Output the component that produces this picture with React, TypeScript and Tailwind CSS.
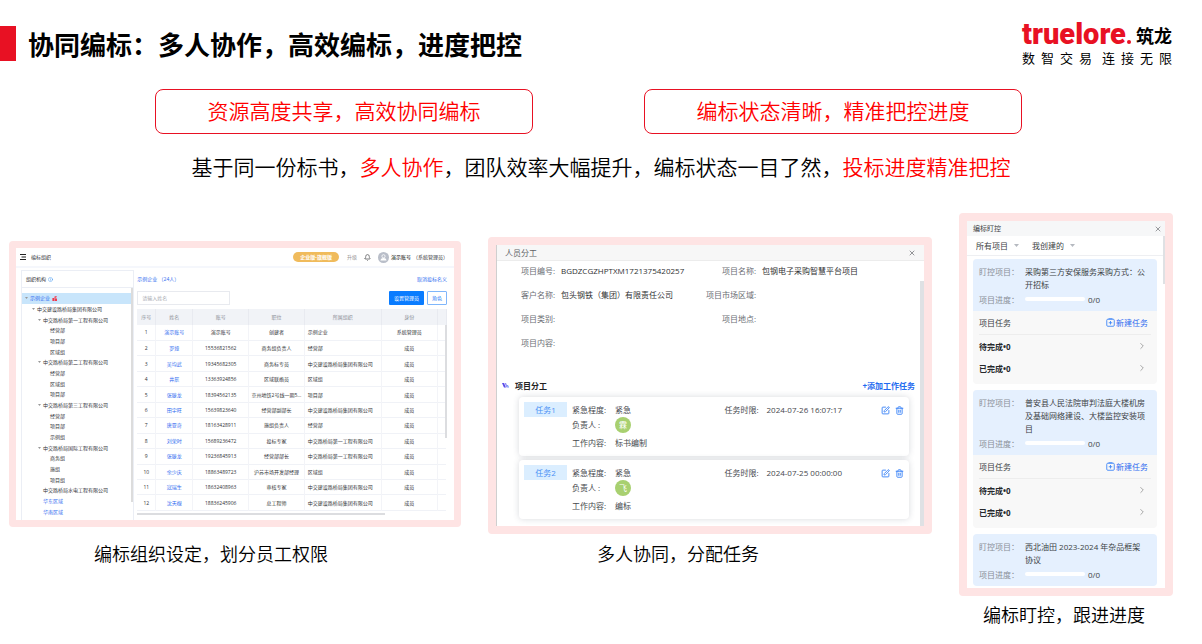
import { Bell, ChevronRight, Info, SquarePen, Trash2, X } from 'lucide-react';

interface TreeNode {
  label: string; level: number; branch?: boolean; active?: boolean; link?: boolean;
}

interface Member {
  name: string; account: string; post: string; org: string; role: string;
}

interface Task {
  tag: string; avatar: string; content: string; deadline: string;
}

const tree: TreeNode[] = [
  { label: '示例企业', level: 0, branch: true, active: true, link: true },
  { label: '中交建设路桥局集团有限公司', level: 1, branch: true },
  { label: '中交路桥局第一工程有限公司', level: 2, branch: true },
  { label: '经营部', level: 3 },
  { label: '项目部', level: 3 },
  { label: '区域组', level: 3 },
  { label: '中交路桥局第二工程有限公司', level: 2, branch: true },
  { label: '经营部', level: 3 },
  { label: '区域组', level: 3 },
  { label: '项目部', level: 3 },
  { label: '中交路桥局第三工程有限公司', level: 2, branch: true },
  { label: '经营部', level: 3 },
  { label: '项目部', level: 3 },
  { label: '示例组', level: 3 },
  { label: '中交路桥局国际工程有限公司', level: 2, branch: true },
  { label: '商务组', level: 3 },
  { label: '施组', level: 3 },
  { label: '项目组', level: 3 },
  { label: '中交路桥局水电工程有限公司', level: 2 },
  { label: '华东区域', level: 2, link: true },
  { label: '华南区域', level: 2, link: true },
];

const indents = ['pl-0.5', 'pl-[9px]', 'pl-[15px]', 'pl-[22px]'];

const members: Member[] = [
  { name: '演示账号', account: '演示账号', post: '创建者', org: '示例企业', role: '系统管理员' },
  { name: '罗娅', account: '15536821562', post: '商务组负责人', org: '经营部', role: '成员' },
  { name: '吴均武', account: '19345682305', post: '商务标专员', org: '中交建设路桥局集团有限公司', role: '成员' },
  { name: '井辰', account: '13363924856', post: '区域联络员', org: '区域组', role: '成员' },
  { name: '张滕龙', account: '18394562135', post: '京州地铁2号线一期5...', org: '项目部', role: '成员' },
  { name: '田宇旺', account: '15639823640', post: '经营部副部长', org: '中交建设路桥局集团有限公司', role: '成员' },
  { name: '唐亚奇', account: '18163428911', post: '施组负责人', org: '经营部', role: '成员' },
  { name: '刘荣时', account: '15689236472', post: '投标专家', org: '中交路桥局第一工程有限公司', role: '成员' },
  { name: '张滕龙', account: '19236845913', post: '经营部部长', org: '中交路桥局第一工程有限公司', role: '成员' },
  { name: '余少庆', account: '18863489723', post: '沪苏市场开发部经理', org: '区域组', role: '成员' },
  { name: '寇瑞生', account: '18632408963', post: '审核专家', org: '中交建设路桥局集团有限公司', role: '成员' },
  { name: '沈天棍', account: '18836245906', post: '总工程师', org: '中交建设路桥局集团有限公司', role: '成员' },
];

const tasks: Task[] = [
  { tag: '任务1', avatar: '霖', content: '标书编制', deadline: '2024-07-26 16:07:17' },
  { tag: '任务2', avatar: '飞', content: '编标', deadline: '2024-07-25 00:00:00' },
];

const projects = [
  { name: '采购第三方安保服务采购方式：公开招标', open: true },
  { name: '普安县人民法院审判法庭大楼机房及基础网络建设、大楼监控安装项目', open: true },
  { name: '西北油田 2023-2024 年杂品框架协议', open: false },
];

function Logo() {
  return (
    <div className="w-[150px]">
      <div className="flex items-end justify-between whitespace-nowrap">
        <div className="flex items-end font-['Roboto'] text-[29px] leading-[28px] font-black text-[#e81123]">
          truelore<span className="mb-1 ml-px h-1 w-1 rounded-full bg-[#e81123]" />
        </div>
        <span className="text-[18px] leading-[24px] font-bold text-black">筑龙</span>
      </div>
      <div className="mt-0.5 flex justify-between text-[13px] leading-[16px] text-black">
        {['数智交易', '连接无限'].map(group => (
          <div key={group} className="flex w-[70px] justify-between">
            {group.split('').map(c => <span key={c}>{c}</span>)}
          </div>
        ))}
      </div>
    </div>
  );
}

function MenuIcon() {
  return (
    <svg viewBox="0 0 12 12" className="h-1.5 w-1.5" fill="#222">
      <path d="M0 0h12v2.200H0zM3 4.900h9v2.200H3zM0 9.800h12V12H0z" />
    </svg>
  );
}

function UserIcon() {
  return (
    <svg viewBox="0 0 22 22" className="h-[11px] w-[11px]">
      <circle cx="11" cy="11" r="11" fill="#b9bec9" />
      <circle cx="11" cy="8.5" r="3.2" fill="none" stroke="#fff" strokeWidth="1.6" />
      <path d="M4.8 17c.6-3.4 3-5 6.200-5s5.600 1.600 6.200 5z" fill="#fff" />
    </svg>
  );
}

function FlagIcon() {
  return (
    <svg viewBox="0 0 12 12" className="h-[5px] w-[5px]" fill="#f0384b">
      <path d="M1 5h4v7H1zM6 1l5-1v3L8 4v2h4v6H6z" />
    </svg>
  );
}

function SectionIcon() {
  return (
    <svg viewBox="0 0 14 10" className="h-[5px] w-[7px]">
      <path d="M0 0h4l4 9H4z" fill="#5b4be8" />
      <path d="M5 0h3l4 9H9z" fill="#8f8bf5" />
      <path d="M10 4h2l2 5h-2z" fill="#5b8df8" />
    </svg>
  );
}

function AddTaskIcon() {
  return (
    <svg viewBox="0 0 18 18" className="h-[9px] w-[9px]" fill="none" stroke="#3f86f7" strokeWidth="1.800">
      <rect x="1.500" y="2.500" width="15" height="14" rx="2" />
      <path d="M5 1.500h8M9 6v7M5.500 9.500h7" />
    </svg>
  );
}

function Caret() {
  return (
    <svg viewBox="0 0 10 6" className="h-[3px] w-[5px]" fill="#b5b9c0"><path d="M0 0h10L5 6z" /></svg>
  );
}

function OrgPanel() {
  return (
    <section className="overflow-hidden rounded border-[7px] border-[#fee4e4] bg-white text-[5px] leading-[8px] text-[#303236]">
      <header className="flex h-[18px] items-center pr-1.5 pl-1">
        <button aria-label="菜单"><MenuIcon /></button>
        <span className="ml-[5px] flex-1">编标组织</span>
        <span className="rounded-full bg-[#f0bb5c] px-[7px] py-px font-bold text-white">企业版-旗舰版</span>
        <a href="#upgrade" className="ml-2 text-[#999]">升级</a>
        <Bell className="mx-[7px] h-[7px] w-[7px]" />
        <UserIcon />
        <span className="ml-0.5 text-black">演示账号</span>
        <span className="ml-0.5">（系统管理员）</span>
      </header>
      <div className="grid grid-cols-[113fr_309fr] gap-[3px] border-t-2 border-[#f5f7fc] pr-[7px] pl-[5px]">
        <div className="relative mt-0.5 flex flex-col border-x border-t border-[#ebeef5]">
          <div className="flex h-[17px] items-center gap-0.5 border-b border-[#ebeef5] pl-1">
            组织机构 <Info className="h-[5px] w-[5px] text-[#2f8cf0]" />
          </div>
          <ul className="mt-[5px] mr-0.5 mb-[3px] flex flex-1 flex-col">
            {tree.map((node, i) => (
              <li key={i} className={`flex flex-1 items-center gap-0.5 whitespace-nowrap ${indents[node.level]} ${node.active ? 'bg-[#c8e5fb]' : ''} ${node.link ? 'text-[#2f6bf0]' : ''}`}>
                <span className="flex w-1 justify-center">
                  {node.branch && <svg viewBox="0 0 10 6" className="h-[2px] w-[3px]" fill="#999"><path d="M0 0h10L5 6z" /></svg>}
                </span>
                {node.label}
                {node.active && <FlagIcon />}
              </li>
            ))}
          </ul>
          <div className="absolute top-[17px] right-0 bottom-[18px] w-0.5 bg-[#dcdcdc]" />
        </div>
        <div className="min-w-0 pt-[3px] pb-[5px]">
          <div className="flex h-4 items-center justify-between text-[#2f6bf0]">
            <span>示例企业 （24人）</span>
            <a href="#cancel">取消投标名义</a>
          </div>
          <div className="mt-1 flex h-3.5 gap-[3px]">
            <input aria-label="请输入姓名" placeholder="请输入姓名" className="w-[30%] border border-[#e8eaef] px-1 placeholder:text-[#a8abb2]" />
            <button className="ml-auto rounded-[1px] bg-[#0a7cff] px-[5px] text-white">设置管理员</button>
            <button className="rounded-[1px] border border-[#7fb6fb] px-1 text-[#2f7df6]">角色</button>
          </div>
          <div className="relative mt-1">
            <table className="h-[202px] w-full table-fixed border-collapse text-center whitespace-nowrap">
              <colgroup>
                <col className="w-[6%]" /><col className="w-[12%]" /><col className="w-[18%]" /><col className="w-[18%]" />
                <col className="w-[25%]" /><col className="w-[18%]" /><col className="w-[3%]" />
              </colgroup>
              <thead className="bg-[#f1f3f7] text-[#8d9097]">
                <tr className="h-4">
                  {['序号', '姓名', '账号', '职位', '所属组织', '身份', ''].map(h => (
                    <th key={h} className="border-r border-[#e8eaf0] p-0 font-normal">{h}</th>
                  ))}
                </tr>
              </thead>
              <tbody>
                {members.map((m, i) => (
                  <tr key={i} className="h-[15px] border-b border-[#f0f2f7]">
                    <td className="border-r border-[#f3f4f8] p-0">{i + 1}</td>
                    <td className="border-r border-[#f3f4f8] p-0 text-[#2f6bf0]">{m.name}</td>
                    <td className="border-r border-[#f3f4f8] p-0">{m.account}</td>
                    <td className="border-r border-[#f3f4f8] p-0">{m.post}</td>
                    <td className="border-r border-[#f3f4f8] p-0 pl-[3px] text-left">{m.org}</td>
                    <td className="border-r border-[#f3f4f8] p-0">{m.role}</td>
                    <td className="p-0" />
                  </tr>
                ))}
              </tbody>
            </table>
            <div className="absolute top-4 right-0 h-[56%] w-0.5 bg-[#dcdde0]" />
          </div>
          <div className="mt-0.5 h-0.5 w-4/5 bg-[#dcdde0]" />
        </div>
      </div>
    </section>
  );
}

function AssignPanel() {
  const info = [
    ['项目编号:', 'BGDZCGZHPTXM1721375420257'], ['项目名称:', '包钢电子采购智慧平台项目'],
    ['客户名称:', '包头钢铁（集团）有限责任公司'], ['项目市场区域:', ''],
    ['项目类别:', ''], ['项目地点:', ''],
    ['项目内容:', ''],
  ];
  return (
    <section className="relative overflow-hidden rounded border-8 border-[#fee4e4] bg-white text-[8px] leading-[10px] text-[#45484d]">
      <div className="border-l border-[#cfcfcf] pb-[7px]">
        <header className="flex h-4 items-center justify-between border-b border-[#ececec] bg-[#f7f7f7] pr-2 pl-2 text-[#606266]">
          人员分工
          <button aria-label="关闭"><X className="h-2 w-2" /></button>
        </header>
        <dl className="mt-[5px] grid grid-cols-[58fr_134fr_55fr_162fr] gap-x-1.5 gap-y-3.5 whitespace-nowrap">
          {info.map(([label, value]) => (
            <div key={label} className="contents">
              <dt className="flex h-2.5 justify-end text-[#6b6e74]">{label}</dt>
              <dd className="text-[#303133]">{value}</dd>
            </div>
          ))}
        </dl>
        <div className="mt-8 flex h-[11px] items-center pr-[9px] pl-[5px] font-bold">
          <SectionIcon />
          <h3 className="ml-1.5 flex-1 text-[#222]">项目分工</h3>
          <button className="text-[#1f6bf0]">+添加工作任务</button>
        </div>
        <div className="mt-1.5 mr-[15px] ml-[22px] space-y-1">
          {tasks.map(t => (
            <article key={t.tag} className="grid grid-cols-[43px_148fr_152fr_auto] gap-x-[5px] rounded-sm bg-white px-[5px] pt-[5px] pb-1 shadow-[0_0_6px_rgba(60,70,90,0.2)]">
              <div className="flex h-[15px] items-center justify-center bg-[#dbeeff] text-[#4a90f5]">{t.tag}</div>
              <dl className="grid grid-cols-[43px_1fr] grid-rows-[15px_16px_19px] items-center">
                <dt>紧急程度:</dt><dd>紧急</dd>
                <dt>负责人 :</dt>
                <dd><span className="flex h-4 w-4 items-center justify-center rounded-full bg-[#a8d070] text-white">{t.avatar}</span></dd>
                <dt>工作内容:</dt><dd>{t.content}</dd>
              </dl>
              <dl className="grid h-[15px] grid-cols-[42px_1fr] items-center whitespace-nowrap">
                <dt>任务时限:</dt><dd>{t.deadline}</dd>
              </dl>
              <div className="flex h-4 items-center gap-[5px] text-[#3f86f7]">
                <button aria-label="编辑"><SquarePen className="h-[9px] w-[9px]" strokeWidth={2.5} /></button>
                <button aria-label="删除"><Trash2 className="h-[9px] w-[9px]" strokeWidth={2.5} /></button>
              </div>
            </article>
          ))}
        </div>
      </div>
      <div className="absolute top-9 right-0 bottom-0 w-1 bg-[#dfe1e4]" />
    </section>
  );
}

function MonitorPanel() {
  return (
    <section className="relative overflow-hidden rounded border-8 border-[#fee4e4] bg-white text-[8px] leading-[13px] text-[#3c3f44]">
      <header className="flex h-[15px] items-center justify-between bg-[#f6f7f8] pr-[3px] pl-1.5 text-[7px]">
        编标盯控
        <button aria-label="关闭"><X className="h-2 w-2" strokeWidth={1.5} /></button>
      </header>
      <div className="flex h-5 items-center border-b border-[#eeeff2] pl-[9px]">
        <select aria-label="项目范围" className="appearance-none"><option>所有项目</option></select>
        <span className="mr-[13px] ml-1.5"><Caret /></span>
        <select aria-label="创建人" className="appearance-none"><option>我创建的</option></select>
        <span className="ml-1.5"><Caret /></span>
      </div>
      <div className="mt-[3px] mr-2 mb-0.5 ml-1.5 space-y-1.5">
        {projects.map(p => (
          <article key={p.name} className="overflow-hidden rounded-sm bg-[#f8f8f8]">
            <dl className="grid grid-cols-[46px_122px] bg-[#e5f0fe] pt-1.5 pb-1 pl-1.5">
              <dt className="text-[#8a8f98]">盯控项目：</dt>
              <dd>{p.name}</dd>
              <dt className="flex h-4 items-center text-[#8a8f98]">项目进度：</dt>
              <dd className="flex h-4 items-center gap-[3px]">
                <span className="h-1 w-[60px] rounded-full bg-white" />0/0
              </dd>
            </dl>
            {p.open && (
              <div className="px-1.5 pb-[5px]">
                <div className="flex h-6 items-center justify-between border-b border-[#ededed] pr-[3px]">
                  项目任务
                  <button className="flex items-center gap-px text-[#2f6bf0]"><AddTaskIcon />新建任务</button>
                </div>
                {['待完成•0', '已完成•0'].map(s => (
                  <button key={s} className="flex h-[22px] w-full items-center justify-between pr-1 font-bold text-[#26282c]">
                    {s}<ChevronRight className="h-2.5 w-2.5 text-[#777]" strokeWidth={1.5} />
                  </button>
                ))}
              </div>
            )}
          </article>
        ))}
      </div>
      <div className="absolute top-[15px] right-0 h-12 w-0.5 bg-[#dfe1e4]" />
    </section>
  );
}

export default function App() {
  return (
    <main className="bg-white font-['Open_Sans','Noto_Sans_CJK_SC',sans-serif] text-black">
      <header className="flex items-start justify-between pr-[30px]">
        <div className="flex pt-[26px]">
          <span className="h-[35px] w-4 bg-[#e81123]" />
          <h1 className="ml-3 pt-px text-[26px] leading-[36px] font-bold">协同编标：多人协作，高效编标，进度把控</h1>
        </div>
        <div className="pt-5"><Logo /></div>
      </header>
      <div className="mt-[23px] grid grid-cols-2 gap-[111px] pr-[180px] pl-[155px] text-center text-[21px] leading-[43px] font-[350] text-[#ff0000]">
        <h2 className="rounded-lg border border-[#e81123]">资源高度共享，高效协同编标</h2>
        <h2 className="rounded-lg border border-[#e81123]">编标状态清晰，精准把控进度</h2>
      </div>
      <p className="mt-[19px] text-center text-[21px] leading-[28px] font-[350]">
        基于同一份标书，<span className="text-[#ff0000]">多人协作</span>，团队效率大幅提升，编标状态一目了然，<span className="text-[#ff0000]">投标进度精准把控</span>
      </p>
      <div className="mt-8 grid grid-cols-[452fr_444fr_214fr] items-start gap-[27px] pr-[29px] pl-[9px] text-center text-[18px] leading-[28px] font-[350]">
        <figure className="min-w-0 pt-7">
          <div className="text-left font-normal"><OrgPanel /></div>
          <figcaption className="mt-[13px] pr-12">编标组织设定，划分员工权限</figcaption>
        </figure>
        <figure className="min-w-0 pt-6">
          <div className="text-left font-normal"><AssignPanel /></div>
          <figcaption className="mt-1.5 pr-16">多人协同，分配任务</figcaption>
        </figure>
        <figure className="min-w-0">
          <div className="text-left font-normal"><MonitorPanel /></div>
          <figcaption className="mt-[5px] pr-1">编标盯控，跟进进度</figcaption>
        </figure>
      </div>
    </main>
  );
}
